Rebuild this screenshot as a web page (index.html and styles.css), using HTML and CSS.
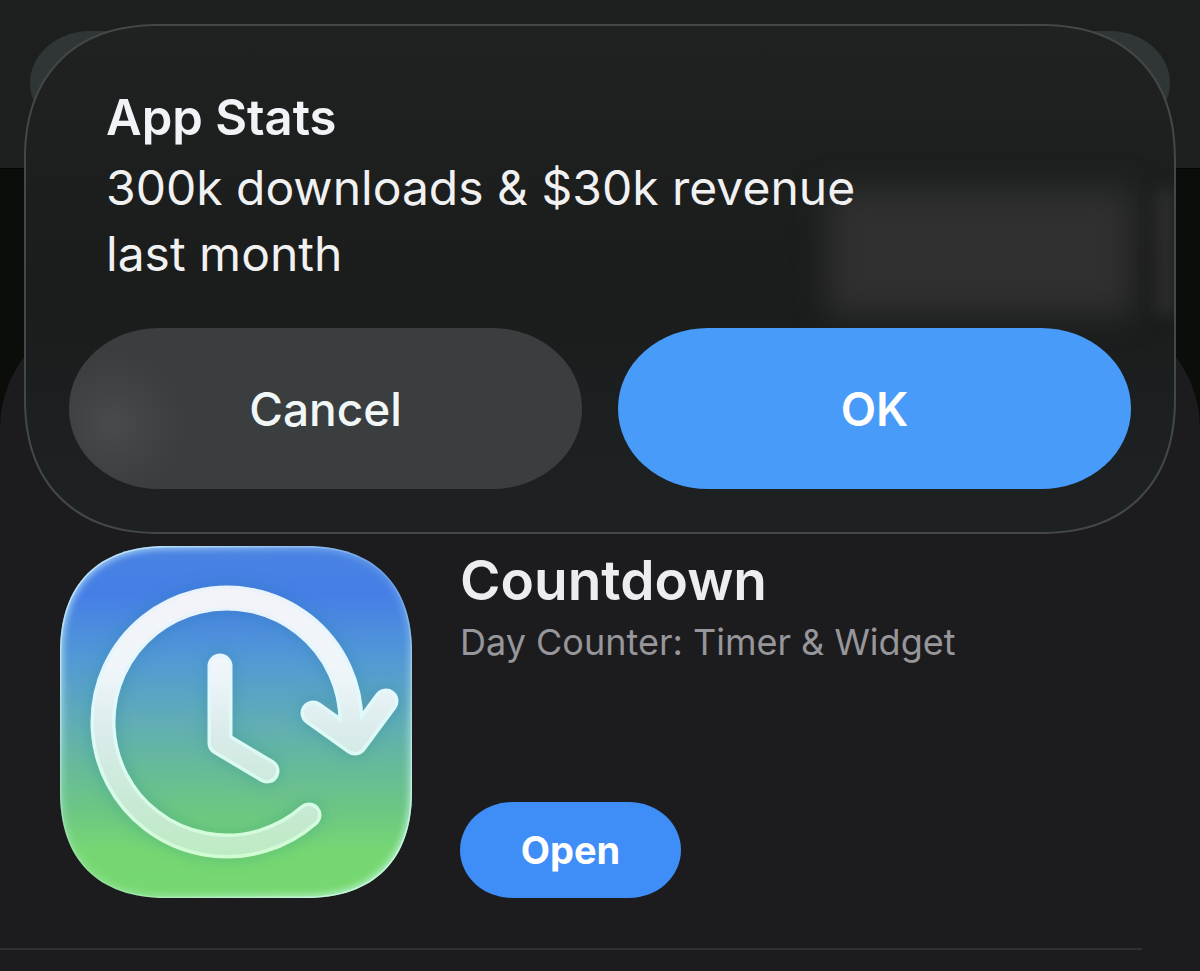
FILE: index.html
```html
<!DOCTYPE html>
<html lang="en">
<head>
  <meta charset="UTF-8">
  <meta name="viewport" content="width=device-width, initial-scale=1.0">
  <title>Countdown</title>
  <link rel="stylesheet" href="styles.css">
</head>
<body>
  <header class="topbar">
    <div class="topbar-pill"></div>
  </header>

  <main class="sheet">
    <article class="app">
      <svg class="app-icon" viewBox="0 0 352 352" role="img" aria-label="Countdown app icon">
        <defs>
          <linearGradient id="sky" x1="0" y1="0" x2="0" y2="1">
            <stop offset="0" stop-color="#4a83e2"/>
            <stop offset="0.14" stop-color="#457fe6"/>
            <stop offset="0.32" stop-color="#5299d5"/>
            <stop offset="0.5" stop-color="#60adb6"/>
            <stop offset="0.62" stop-color="#66ba9b"/>
            <stop offset="0.76" stop-color="#6dc882"/>
            <stop offset="0.87" stop-color="#76d772"/>
            <stop offset="1" stop-color="#76d870"/>
          </linearGradient>
          <linearGradient id="rim" x1="0" y1="0" x2="1" y2="1">
            <stop offset="0.1" stop-color="#dff" stop-opacity="0.6"/>
            <stop offset="0.3" stop-color="#dff" stop-opacity="0.35"/>
            <stop offset="0.5" stop-color="#dff" stop-opacity="0.15"/>
            <stop offset="0.7" stop-color="#dff" stop-opacity="0.35"/>
            <stop offset="0.9" stop-color="#dff" stop-opacity="0.6"/>
          </linearGradient>
          <linearGradient id="glass" gradientUnits="userSpaceOnUse" x1="0" y1="40" x2="0" y2="312">
            <stop offset="0" stop-color="#f3f3f8"/>
            <stop offset="0.3" stop-color="#f0f6fa"/>
            <stop offset="0.55" stop-color="#d9ebea"/>
            <stop offset="0.8" stop-color="#c8e9d4"/>
            <stop offset="1" stop-color="#bdebc2"/>
          </linearGradient>
          <linearGradient id="glassEdge" gradientUnits="userSpaceOnUse" x1="0" y1="40" x2="0" y2="312">
            <stop offset="0" stop-color="#eaf2fc"/>
            <stop offset="0.4" stop-color="#e2f8fd"/>
            <stop offset="0.7" stop-color="#d8fbf0"/>
            <stop offset="1" stop-color="#d0fcd2"/>
          </linearGradient>
          <path id="tileShape" d="M0 106C0 38 38 0 106 0H246C314 0 352 38 352 106V246C352 314 314 352 246 352H106C38 352 0 314 0 246Z"/>
          <clipPath id="tile">
            <use href="#tileShape"/>
          </clipPath>
          <filter id="soft" x="-20%" y="-20%" width="140%" height="140%">
            <feGaussianBlur stdDeviation="8"/>
          </filter>
          <filter id="rimSoft">
            <feGaussianBlur stdDeviation="3"/>
          </filter>
          <g id="clock" fill="none" stroke-linecap="round" stroke-linejoin="round">
            <path d="M249 269A124 124 0 1 1 291 176L294 192M253 167L295 197L326 155M160 120V197L207 225"/>
          </g>
        </defs>
        <g clip-path="url(#tile)">
          <rect width="352" height="352" fill="url(#sky)"/>
          <use href="#tileShape" fill="none" stroke="url(#rim)" stroke-width="7" filter="url(#rimSoft)"/>
          <use href="#tileShape" fill="none" stroke="url(#rim)" stroke-width="3"/>
          <use href="#clock" stroke="#2b6d86" stroke-opacity="0.22" stroke-width="28" filter="url(#soft)"/>
          <use href="#clock" stroke="url(#glassEdge)" stroke-width="25"/>
          <use href="#clock" stroke="url(#glass)" stroke-width="18"/>
        </g>
      </svg>
      <div class="app-info">
        <h1 class="app-name">Countdown</h1>
        <p class="app-subtitle">Day Counter: Timer &amp; Widget</p>
        <button class="open-btn" type="button">Open</button>
      </div>
    </article>
    <hr class="divider">
  </main>

  <div class="alert" role="alertdialog" aria-labelledby="alertTitle" aria-describedby="alertText">
    <div class="alert-body">
      <h2 class="alert-title" id="alertTitle">App Stats</h2>
      <p class="alert-text" id="alertText">300k downloads &amp; $30k revenue last month</p>
    </div>
    <div class="alert-actions">
      <button class="alert-btn cancel" type="button">Cancel</button>
      <button class="alert-btn ok" type="button">OK</button>
    </div>
  </div>
</body>
</html>
```
FILE: styles.css
```css
* {
  box-sizing: border-box;
}

body {
  display: flex;
  flex-direction: column;
  min-height: 100vh;
  margin: 0;
  font-family: Inter, "Liberation Sans", sans-serif;
  background: #0a0d09;
  color: #ededf0;
}

h1, h2, p {
  margin: 0;
}

button {
  border: none;
  font-family: inherit;
  cursor: pointer;
}

.topbar {
  padding: 31px 30px 33px;
  margin-bottom: 140px;
  background: #1d1f1f;
  border-bottom: 1px solid #050505;
}

.topbar-pill {
  height: 104px;
  border-radius: 60px / 52px;
  background: #303535;
}

.sheet {
  flex: 1;
  padding-top: 237px;
  border-radius: 120px 120px 0 0;
  background: #1c1c1e;
}

.app {
  display: flex;
  gap: 48px;
  padding: 0 60px;
}

.app-icon {
  flex: none;
  width: 352px;
  height: 352px;
}

.app-info {
  display: flex;
  flex-direction: column;
  align-items: flex-start;
}

.app-name {
  font-size: 55px;
  font-weight: 600;
  line-height: 68px;
}

.app-subtitle {
  margin-top: 6px;
  font-size: 36px;
  line-height: 44px;
  color: #96969b;
}

.open-btn {
  margin-top: auto;
  width: 221px;
  height: 96px;
  border-radius: 52px / 48px;
  background: #3f8df7;
  color: #fff;
  font-size: 38px;
  font-weight: 700;
}

.divider {
  height: 2px;
  margin: 50px 58px 0 0;
  border: none;
  background: #303032;
}

/* alert over the page */
.alert {
  position: absolute;
  top: 24px;
  left: 24px;
  right: 24px;
  overflow: hidden;
  padding: 59px 42px 42px;
  border: 2px solid #444747;
  border-radius: 136px;
  corner-shape: superellipse(1.2);
  background: linear-gradient(#202222, #1d1f1f 30%, #1b1c1c 50%, #1c2020 80%, #1d2121);
}

/* card and page edge behind the glass */
.alert::before,
.alert::after {
  content: "";
  position: absolute;
  top: 164px;
  right: 42px;
  width: 304px;
  height: 124px;
  background: #303030;
  filter: blur(16px);
}

.alert::after {
  right: 0;
  width: 16px;
  filter: blur(8px);
}

.alert-body,
.alert-actions {
  position: relative;
  z-index: 1;
}

.alert-body {
  padding: 0 38px;
}

.alert-title {
  font-size: 49px;
  font-weight: 600;
  line-height: 66px;
  color: #f1f4f6;
}

.alert-text {
  max-width: 800px;
  margin-top: 4px;
  font-size: 48px;
  line-height: 66px;
  color: #f1f1f2;
}

.alert-actions {
  display: flex;
  gap: 36px;
  margin: 41px 1px 1px;
}

.alert-btn {
  flex: 1;
  height: 161px;
  border-radius: 90px / 80px;
  font-size: 46px;
  font-weight: 500;
}

.cancel {
  background: radial-gradient(circle at 44px 96px, #484a4b, #3a3e3f 70px);
  color: #f1f7f7;
}

.ok {
  background: #489bf8;
  color: #fff;
  font-weight: 600;
}
```
